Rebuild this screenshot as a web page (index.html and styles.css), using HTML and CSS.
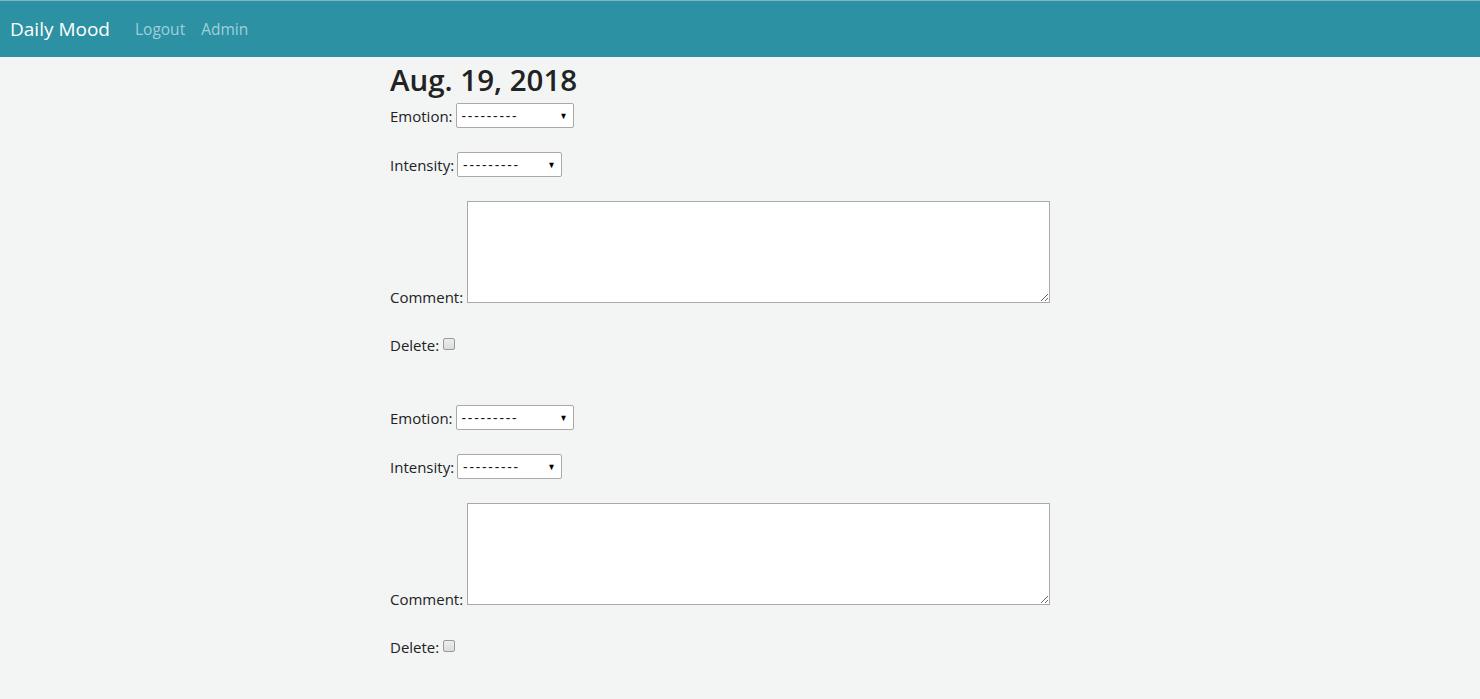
FILE: index.html
```html
<!DOCTYPE html>
<html lang="en">
<head>
<meta charset="utf-8">
<title>Daily Mood</title>
<link rel="stylesheet" href="styles.css">
</head>
<body>
<nav class="navbar">
  <a class="brand" href="#">Daily Mood</a>
  <a class="nav-link" href="#">Logout</a>
  <a class="nav-link" href="#">Admin</a>
</nav>
<main class="container">
  <h2 class="date">Aug. 19, 2018</h2>
  <form class="entries">
    <div class="entry">
      <p class="field"><label>Emotion:</label><span class="sel sel-emotion"><select><option>---------</option></select><span class="arrow">&#9660;</span></span></p>
      <p class="field"><label>Intensity:</label><span class="sel sel-intensity"><select><option>---------</option></select><span class="arrow">&#9660;</span></span></p>
      <p class="field field-comment"><label>Comment:</label><textarea></textarea></p>
      <p class="field field-delete"><label>Delete:</label><input type="checkbox"></p>
    </div>
    <div class="entry">
      <p class="field"><label>Emotion:</label><span class="sel sel-emotion"><select><option>---------</option></select><span class="arrow">&#9660;</span></span></p>
      <p class="field"><label>Intensity:</label><span class="sel sel-intensity"><select><option>---------</option></select><span class="arrow">&#9660;</span></span></p>
      <p class="field field-comment"><label>Comment:</label><textarea></textarea></p>
      <p class="field field-delete"><label>Delete:</label><input type="checkbox"></p>
    </div>
  </form>
</main>
</body>
</html>
```
FILE: styles.css
```css
html, body {
  margin: 0;
  padding: 0;
}
body {
  background: #f2f5f4;
  font-family: "Open Sans", "Noto Sans", sans-serif;
  color: #222;
  font-size: 15px;
}
.navbar {
  height: 56px;
  background: #2c91a3;
  border-top: 1px solid #7fb6c2;
  display: flex;
  align-items: center;
  padding-left: 10px;
  box-sizing: content-box;
}
.navbar a {
  text-decoration: none;
}
.brand {
  color: #fff;
  font-size: 19px;
  margin-right: 25px;
}
.nav-link {
  color: #9fd0da;
  font-size: 15.5px;
  margin-right: 16px;
}
.container {
  margin-left: 390px;
  width: 700px;
}
.date {
  font-size: 29.5px;
  font-weight: 600;
  margin: 4px 0 4px 0;
  line-height: 38px;
  color: #222;
}
.entries {
  margin: 0;
}
.entry {
  margin-bottom: 48px;
}
.field {
  display: flex;
  align-items: center;
  margin: 0 0 24px 0;
  height: 25px;
}
.field label {
  margin-right: 3px;
}
.sel {
  position: relative;
  display: inline-block;
  height: 25px;
}
.sel select {
  appearance: none;
  -webkit-appearance: none;
  height: 25px;
  box-sizing: border-box;
  border: 1px solid #a9a9a9;
  border-radius: 2px;
  background: #fff;
  font-family: "Open Sans", sans-serif;
  font-size: 14px;
  letter-spacing: 1.8px;
  padding: 0 0 0 5px;
  color: #111;
  margin: 0;
}
.sel-emotion select {
  width: 118px;
}
.sel-intensity select {
  width: 105px;
}
.arrow {
  position: absolute;
  right: 6px;
  top: 8px;
  font-size: 9px;
  line-height: 9px;
  color: #000;
  pointer-events: none;
  transform: scaleX(0.9);
}
.field-comment {
  height: 102px;
  align-items: flex-end;
}
.field-comment label {
  line-height: 18px;
  margin-bottom: -3px;
}
.field-comment textarea {
  width: 583px;
  height: 102px;
  box-sizing: border-box;
  border: 1px solid #a9a9a9;
  background: #fff;
  margin: 0 0 0 1px;
  padding: 2px;
}
.field-delete {
  margin-top: 30px;
  height: 24px;
  margin-bottom: 0;
}
.field-delete input {
  appearance: none;
  -webkit-appearance: none;
  width: 12px;
  height: 12px;
  box-sizing: border-box;
  border: 1px solid #9a9a9a;
  border-radius: 2px;
  background: linear-gradient(#ededed, #dcdcdc);
  margin: -2px 0 0 1px;
}
```
